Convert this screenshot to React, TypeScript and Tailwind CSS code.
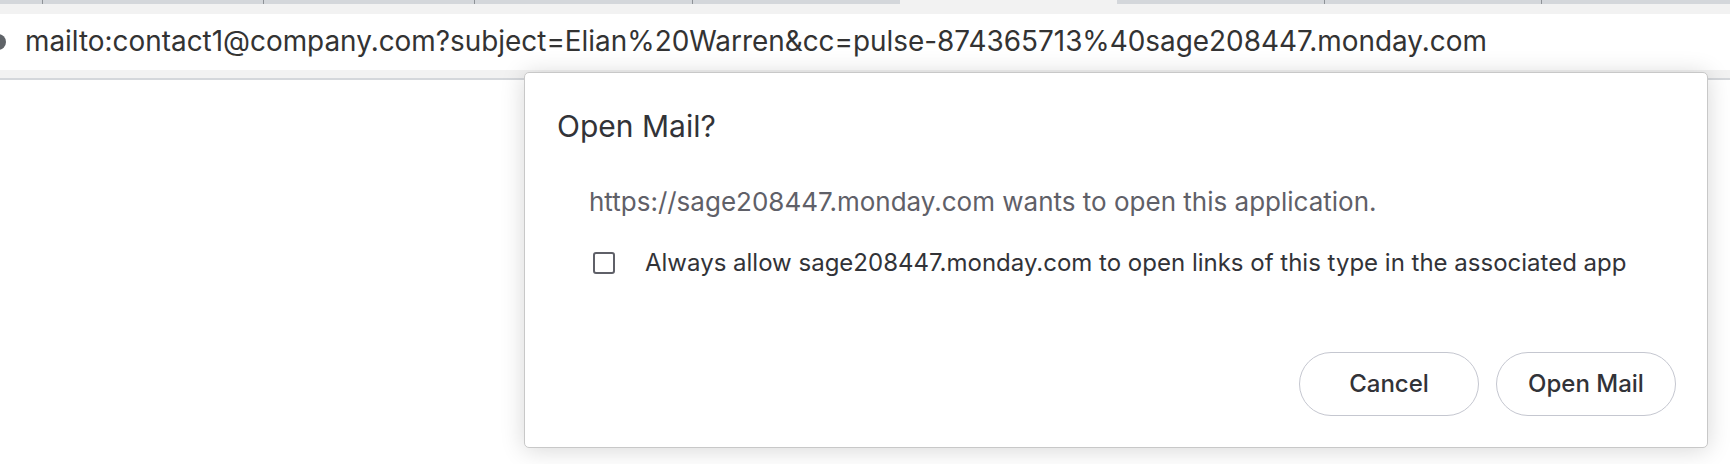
import React from "react";

const tabSeps = [42, 263, 474, 692, 1324, 1541];

export default function App() {
  return (
    <div className="relative w-[1730px] h-[464px] overflow-hidden bg-white" style={{ fontFamily: "Inter, 'Noto Sans', sans-serif" }}>
      {/* tab strip */}
      <div className="relative h-[4px] bg-[#d4d7db] flex">
        <div className="w-[900px] h-full" />
        <div className="w-[217px] h-full bg-[#f2f2f2]" />
        {tabSeps.map((x) => (
          <div key={x} className="absolute top-0 h-[4px] w-[1px] bg-[#8e9297]" style={{ left: x }} />
        ))}
      </div>
      <div className="h-[10px] bg-[#f2f2f2]" />
      {/* address row */}
      <div className="h-[56px] bg-white flex items-center relative">
        <div className="absolute left-[-10px] top-[20px] w-[16px] h-[16px] rounded-full bg-[#5f6368]" />
        <div className="pl-[25px] text-[27.9px] text-[#333333] whitespace-nowrap leading-none">
          mailto:contact1@company.com?subject=Elian%20Warren&amp;cc=pulse-874365713%40sage208447.monday.com
        </div>
      </div>
      <div className="h-[8px] bg-[#f2f2f2]" />
      <div className="h-[2px] bg-[#d4d7db]" />
      <div className="flex-1 bg-[#fefefe]" />

      {/* dialog */}
      <div className="absolute left-[524px] top-[72px] w-[1184px] h-[376px] bg-white rounded-[5px] border border-[#c8c8c8] shadow-[0_2px_24px_rgba(0,0,0,0.16)] flex flex-col">
        <div className="pl-[32px] pt-[38px] text-[30px] leading-none text-[#323338]">Open Mail?</div>
        <div className="pl-[64px] pt-[48px] text-[26px] leading-none text-[#5f6068] whitespace-nowrap">
          https://sage208447.monday.com wants to open this application.
        </div>
        <div className="pl-[68px] pt-[36px] flex items-center gap-[30px]">
          <div className="w-[22px] h-[22px] border-[2.5px] border-[#5f6068] rounded-[3px]" />
          <div className="text-[24px] leading-none text-[#323338] whitespace-nowrap">
            Always allow sage208447.monday.com to open links of this type in the associated app
          </div>
        </div>
        <div className="flex-1" />
        <div className="flex justify-end gap-[17px] pr-[31px] pb-[31px]">
          <button className="w-[180px] h-[64px] rounded-full border border-[#c5c7d0] text-[24px] font-medium text-[#323338]">Cancel</button>
          <button className="w-[180px] h-[64px] rounded-full border border-[#c5c7d0] text-[24px] font-medium text-[#323338]">Open Mail</button>
        </div>
      </div>
    </div>
  );
}
